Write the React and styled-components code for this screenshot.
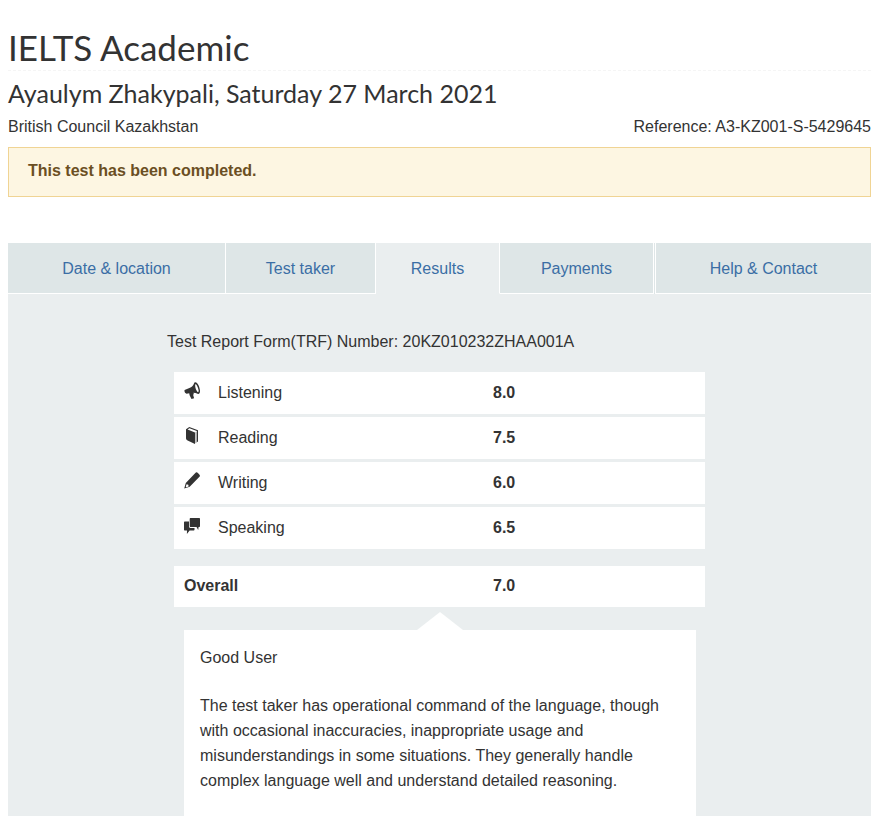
import React from "react";
import styled, { createGlobalStyle } from "styled-components";

const GlobalStyle = createGlobalStyle`
  *, *::before, *::after { box-sizing: border-box; }
  body {
    margin: 0;
    background: #fff;
    color: #333;
    font: 16px/25px "Liberation Sans", Arial, sans-serif;
  }
`;

const Page = styled.main`
  display: flex;
  flex-direction: column;
  min-height: 100vh;
  padding: 28px 8px 0;
`;

const Title = styled.h1`
  margin: 0;
  padding-bottom: 4px;
  border-bottom: 1px dashed #f5f5f5;
  font: 400 35px/38px Lato, sans-serif;
`;

const Subtitle = styled.h2`
  margin: 7px 0 6px;
  font: 400 25px/30px Lato, sans-serif;
`;

const Details = styled.div`
  display: flex;
  flex-wrap: wrap;
  justify-content: space-between;
  gap: 0 16px;
`;

const Notice = styled.div`
  margin-top: 8px;
  padding: 10px 19px 13px;
  border: 1px solid #f0d494;
  background: #fdf6e2;
  color: #6b4f23;
  font-weight: bold;
`;

const Tabs = styled.nav`
  display: grid;
  grid-template-columns: 218fr 150fr 124fr 154fr 217fr;
  margin-top: 46px;
`;

const Tab = styled.a`
  padding: 13px 8px 12px;
  border-right: ${(p) => (p.$last ? 0 : 1)}px solid #fff;
  border-bottom: 1px solid ${(p) => (p.$active ? "#eaeeef" : "#fff")};
  background: ${(p) => (p.$active ? "#eaeeef" : "#dee6e7")};
  color: #3b6ea5;
  text-align: center;
  text-decoration: none;
`;

const LastTab = styled.div`
  display: grid;
  padding-left: 1px;
  background: #dee6e7;

  ${Tab} {
    border-left: 1px solid #fff;
  }
`;

const Panel = styled.section`
  display: flex;
  flex: 1;
  flex-direction: column;
  align-items: center;
  padding: 35px 8px 0;
  background: #eaeeef;
`;

const Report = styled.div`
  display: flex;
  flex: 1;
  flex-direction: column;
  width: 100%;
  max-width: 545px;
`;

const FormNumber = styled.p`
  margin: 0 0 18px;
`;

const Scores = styled.table`
  display: block;
  margin: 0 7px;
`;

const ScoreGroup = styled.tbody`
  display: grid;
  gap: 3px;
  margin-bottom: ${(p) => (p.$summary ? 5 : 17)}px;
`;

const ScoreRow = styled.tr`
  display: grid;
  grid-template-columns: 309fr 202fr;
  padding: ${(p) => (p.$summary ? "7px 10px 9px" : "8px 10px 9px")};
  background: #fff;
`;

const Skill = styled.th`
  display: flex;
  gap: 18px;
  padding: 0;
  font-weight: ${(p) => (p.$summary ? "bold" : "normal")};
  text-align: left;
`;

const Score = styled.td`
  padding: 0;
  font-weight: bold;
`;

const Icon = styled.svg`
  flex: none;
  width: 16px;
  height: 20px;
  margin-top: 1px;
  fill: #333;
`;

const Pointer = styled.svg`
  display: block;
  align-self: center;
  width: 46px;
  height: 18px;
  fill: #fff;
`;

const Description = styled.article`
  flex: 1;
  margin: 0 16px 0 17px;
  padding: 15px 16px 24px;
  background: #fff;
`;

const Level = styled.h3`
  margin: 0 0 23px;
  font: inherit;
`;

const Text = styled.p`
  margin: 0;
`;

const icons = {
  listening: (
    <path
      fillRule="evenodd"
      d="M11.2 1.2C13.5 1 15.7 5.6 16 9.6c.1 2.6-1 3.9-2.4 3.2-1.3-.6-2.6-.9-4.2-1l.5 1.2-.8.7 1 3.6-2.6.8L5.6 14.3l-.4-2.1-2.4.5C1.2 12.9 0 10.4.6 9L6 6.8c2.1-1.1 3.4-2.6 4-4.4.2-.7.6-1.1 1.2-1.2Zm.4 1.8c-.9 1.4-.3 3.7.3 5.2.7 1.7 1.7 3.2 2.4 2.9.8-1.1 0-3.5-.7-5.1-.6-1.4-1.3-2.6-2-3Z"
    />
  ),
  reading: (
    <path d="M2 3.2 5.3 1 14 4.3v11.2l-1.2.7V5L5.4 2.2 3.6 3.4 11 6.4V18l-7.4-3.6C2.5 13.8 2 13.2 2 12.3ZM11.7 6.2l.5-.3v11l-.5.4Z" />
  ),
  writing: (
    <path
      fillRule="evenodd"
      d="M11.1 2.2c1.1-1.1 1.8-1.1 2.8-.1l1.4 1.4c.9 1 .9 1.6-.1 2.6L5.7 15.7.2 17.6l1.6-5.7ZM2.6 13.3l-.8 2.3.6.6 2.2-.8-.3-1.7Z"
    />
  ),
  speaking: (
    <path d="M6.7 2H15c.7 0 1 .4 1 1v7c0 .7-.3 1-1 1h-.4l-.4 3-1.7-3H6.7c-.7 0-1-.4-1-1V3c0-.7.4-1 1-1ZM1 5.5h4v5c0 .8.5 1.4 1.4 1.4h4.1v1.6c0 .7-.4 1-1 1H5.6L2.9 18l.1-3.5H1c-.7 0-1-.4-1-1v-7c0-.7.3-1 1-1Z" />
  ),
};

const scores = [
  ["listening", "Listening", "8.0"],
  ["reading", "Reading", "7.5"],
  ["writing", "Writing", "6.0"],
  ["speaking", "Speaking", "6.5"],
];

export default function App() {
  return (
    <>
      <GlobalStyle />
      <Page>
        <Title>IELTS Academic</Title>
        <Subtitle>Ayaulym Zhakypali, Saturday 27 March 2021</Subtitle>
        <Details>
          <span>British Council Kazakhstan</span>
          <span>Reference: A3-KZ001-S-5429645</span>
        </Details>
        <Notice role="status">This test has been completed.</Notice>
        <Tabs>
          <Tab href="#location">Date &amp; location</Tab>
          <Tab href="#taker">Test taker</Tab>
          <Tab href="#results" $active aria-current="page">Results</Tab>
          <Tab href="#payments">Payments</Tab>
          <LastTab>
            <Tab href="#help" $last>Help &amp; Contact</Tab>
          </LastTab>
        </Tabs>
        <Panel id="results">
          <Report>
            <FormNumber>Test Report Form(TRF) Number: 20KZ010232ZHAA001A</FormNumber>
            <Scores>
              <ScoreGroup>
                {scores.map(([id, label, value]) => (
                  <ScoreRow key={id}>
                    <Skill scope="row">
                      <Icon viewBox="0 0 16 20" aria-hidden="true">{icons[id]}</Icon>
                      {label}
                    </Skill>
                    <Score>{value}</Score>
                  </ScoreRow>
                ))}
              </ScoreGroup>
              <ScoreGroup $summary>
                <ScoreRow $summary>
                  <Skill scope="row" $summary>Overall</Skill>
                  <Score>7.0</Score>
                </ScoreRow>
              </ScoreGroup>
            </Scores>
            <Pointer viewBox="0 0 46 18" aria-hidden="true">
              <path d="M23 0 46 18H0Z" />
            </Pointer>
            <Description>
              <Level>Good User</Level>
              <Text>
                The test taker has operational command of the language, though with
                occasional inaccuracies, inappropriate usage and misunderstandings in
                some situations. They generally handle complex language well and
                understand detailed reasoning.
              </Text>
            </Description>
          </Report>
        </Panel>
      </Page>
    </>
  );
}
